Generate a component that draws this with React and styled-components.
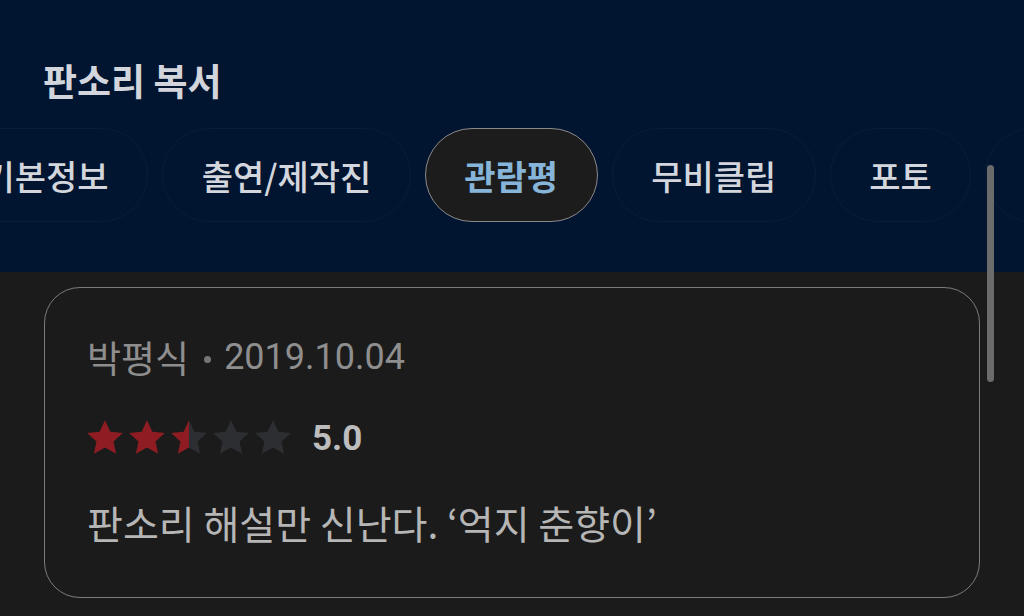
import React from "react";
import styled, { createGlobalStyle } from "styled-components";

const Global = createGlobalStyle`
  html, body { margin: 0; padding: 0; background: #1b1b1b; }
  body { font-family: "Roboto", "Noto Sans CJK KR", sans-serif; overflow: hidden; }
  #root { width: 1024px; height: 616px; }
`;

const Page = styled.div`
  position: relative;
  width: 1024px;
  height: 616px;
  background: #1b1b1b;
  overflow: hidden;
`;

const Header = styled.header`
  background: #011430;
  height: 272px;
  box-sizing: border-box;
  padding-top: 55px;
  display: flex;
  flex-direction: column;
`;

const Title = styled.h1`
  margin: 0 0 0 43px;
  font-family: "Noto Sans CJK KR", sans-serif;
  font-size: 37px;
  line-height: 50px;
  font-weight: 700;
  color: #d2d5db;
`;

const Tabs = styled.nav`
  display: flex;
  gap: 14px;
  margin-top: 23px;
  margin-left: -56px;
`;

const Tab = styled.div`
  flex: none;
  height: 94px;
  box-sizing: border-box;
  padding: 0 38.5px;
  border-radius: 47px;
  display: flex;
  align-items: center;
  font-family: "Noto Sans CJK KR", sans-serif;
  font-size: 34px;
  font-weight: ${(p) => (p.$active ? 700 : 500)};
  color: ${(p) => (p.$active ? "#86b5d9" : "#d3d6dc")};
  background: ${(p) => (p.$active ? "#1c1c1c" : "transparent")};
  border: 1.5px solid ${(p) => (p.$active ? "#8a8a8a" : "#0a1c38")};
`;

const Body = styled.main`
  padding: 15px 44px 0;
`;

const Card = styled.section`
  width: 936px;
  height: 311px;
  box-sizing: border-box;
  border: 1.5px solid #7c7c7c;
  border-radius: 36px;
  padding: 49px 42px 0;
  display: flex;
  flex-direction: column;
`;

const Meta = styled.div`
  display: flex;
  align-items: center;
  height: 40px;
  color: #8e8e8e;
`;

const Name = styled.span`
  font-family: "Noto Sans CJK KR", sans-serif;
  font-size: 37px;
  font-weight: 400;
`;

const Dot = styled.span`
  width: 7px;
  height: 7px;
  border-radius: 50%;
  background: #767676;
  margin: 4px 13px 0 15px;
`;

const DateText = styled.span`
  font-family: "Roboto", sans-serif;
  font-size: 36px;
  color: #8e8e8e;
`;

const RatingRow = styled.div`
  display: flex;
  align-items: center;
  height: 40px;
  margin-top: 41px;
`;

const Stars = styled.div`
  display: flex;
  margin-left: -3px;
`;

const Score = styled.span`
  margin-left: 18px;
  font-family: "Roboto", sans-serif;
  font-weight: 700;
  font-size: 35px;
  color: #bdbdbd;
`;

const Review = styled.p`
  margin: 44px 0 0;
  height: 40px;
  display: flex;
  align-items: center;
  font-family: "Noto Sans CJK KR", sans-serif;
  font-size: 39px;
  color: #b6b6b6;
`;

const Scrollbar = styled.div`
  position: absolute;
  left: 987px;
  top: 165px;
  width: 7px;
  height: 217px;
  border-radius: 4px;
  background: #6b6b6b;
`;

const STAR = "M12 1.8l3.05 6.6 7.15.75-5.35 4.85 1.5 7.05L12 17.4l-6.35 3.65 1.5-7.05L1.8 9.15l7.15-.75z";

function Star({ fill, id }) {
  return (
    <svg width="42" height="42" viewBox="0 0 24 24">
      <defs>
        <linearGradient id={id} x1="0" x2="1" y1="0" y2="0">
          <stop offset={fill} stopColor="#8f1c22" />
          <stop offset={fill} stopColor="#2d2e32" />
        </linearGradient>
      </defs>
      <path d={STAR} fill={`url(#${id})`} />
    </svg>
  );
}

const tabs = ["기본정보", "출연/제작진", "관람평", "무비클립", "포토", "더보기"];

export default function App() {
  const fills = [1, 1, 0.5, 0, 0];
  return (
    <Page>
      <Global />
      <Header>
        <Title>판소리 복서</Title>
        <Tabs>
          {tabs.map((t) => (
            <Tab key={t} $active={t === "관람평"}>
              {t}
            </Tab>
          ))}
        </Tabs>
      </Header>
      <Body>
        <Card>
          <Meta>
            <Name>박평식</Name>
            <Dot />
            <DateText>2019.10.04</DateText>
          </Meta>
          <RatingRow>
            <Stars>
              {fills.map((f, i) => (
                <Star key={i} fill={f} id={`s${i}`} />
              ))}
            </Stars>
            <Score>5.0</Score>
          </RatingRow>
          <Review>판소리 해설만 신난다. ‘억지 춘향이’</Review>
        </Card>
      </Body>
      <Scrollbar />
    </Page>
  );
}
